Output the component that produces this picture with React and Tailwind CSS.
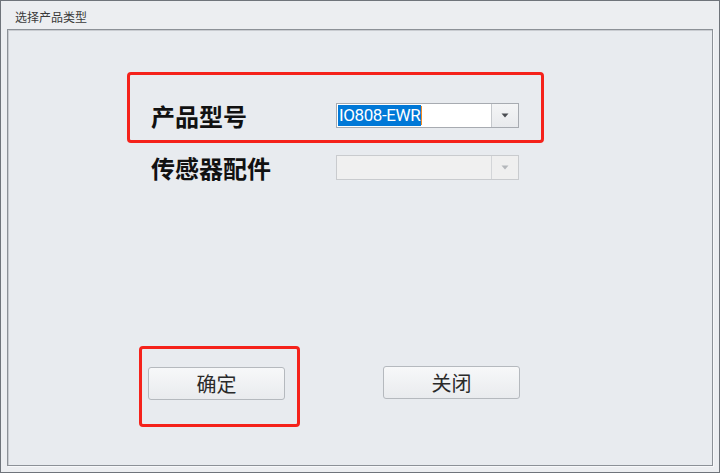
import React from 'react';

function Caret({ disabled }) {
    return (
        <svg width="8" height="5" viewBox="0 0 8 5">
            <path d="M0.5 0.5 L7.5 0.5 L4 4.5 Z" fill={disabled ? '#b4b7bb' : '#4a4d52'} />
        </svg>
    );
}

function ComboBox({ value, disabled }) {
    return (
        <div
            className={`flex h-[25px] w-[183px] border ${
                disabled ? 'border-[#c9cbce] bg-[#f0f0f0]' : 'border-[#a7abb1] bg-white'
            }`}
        >
            <div className="flex flex-1 items-center pl-px">
                {value && (
                    <div className="flex h-[21px] items-center">
                        <span className="flex h-[21px] items-center bg-[#0078d7] pl-px pr-px font-['Roboto',sans-serif] text-[17px] leading-none tracking-[-0.4px] text-white">
                            {value}
                        </span>
                        <span className="h-[19px] w-px bg-[#f08a24]"></span>
                    </div>
                )}
            </div>
            <div
                className={`flex w-[27px] items-center justify-center border-l ${
                    disabled ? 'border-[#d3d5d8] bg-[#efefef]' : 'border-[#c5c8cc] bg-gradient-to-b from-[#f4f5f6] to-[#e8eaed]'
                }`}
            >
                <Caret disabled={disabled} />
            </div>
        </div>
    );
}

function DialogButton({ children }) {
    return (
        <button
            type="button"
            className="flex h-[33px] w-[137px] items-center justify-center rounded-[3px] border border-[#b5b9be] bg-gradient-to-b from-[#f7f8f9] to-[#e9ebee] font-['Noto_Sans_CJK_SC',serif] text-[20px] leading-none text-[#2a2a2a]"
        >
            {children}
        </button>
    );
}

export default function App() {
    return (
        <div className="flex h-[473px] w-[720px] flex-col border border-[#6f747b] bg-[#eceef1] font-['Noto_Sans_CJK_SC',sans-serif]">
            {/* title bar */}
            <div className="flex h-[28px] items-center pl-[14px] pt-[3px] text-[12px] text-[#3a3a3a]">
                选择产品类型
            </div>

            {/* panel */}
            <div className="relative mx-[6px] mb-[6px] flex flex-1 flex-col border border-[#8c9197] bg-[#e8ebef] shadow-[inset_1px_1px_0_#c9ccd1,1px_1px_0_#f7f8fa]">
                <div className="ml-[143px] mt-[73px] flex items-center">
                    <div className="w-[185px] text-[24px] font-bold leading-none text-[#111]">产品型号</div>
                    <ComboBox value="IO808-EWR" />
                </div>
                <div className="ml-[143px] mt-[27px] flex items-center">
                    <div className="w-[185px] text-[24px] font-bold leading-none text-[#111]">传感器配件</div>
                    <ComboBox disabled />
                </div>

                <div className="ml-[140px] mt-[187px] flex items-start gap-[98px]">
                    <DialogButton>确定</DialogButton>
                    <div className="-mt-px">
                        <DialogButton>关闭</DialogButton>
                    </div>
                </div>

                {/* red annotation boxes */}
                <div className="pointer-events-none absolute left-[119px] top-[42px] h-[71px] w-[417px] rounded-[4px] border-[3px] border-[#f5221b]"></div>
                <div className="pointer-events-none absolute left-[131px] top-[316px] h-[81px] w-[161px] rounded-[4px] border-[3px] border-[#f5221b]"></div>
            </div>
        </div>
    );
}
